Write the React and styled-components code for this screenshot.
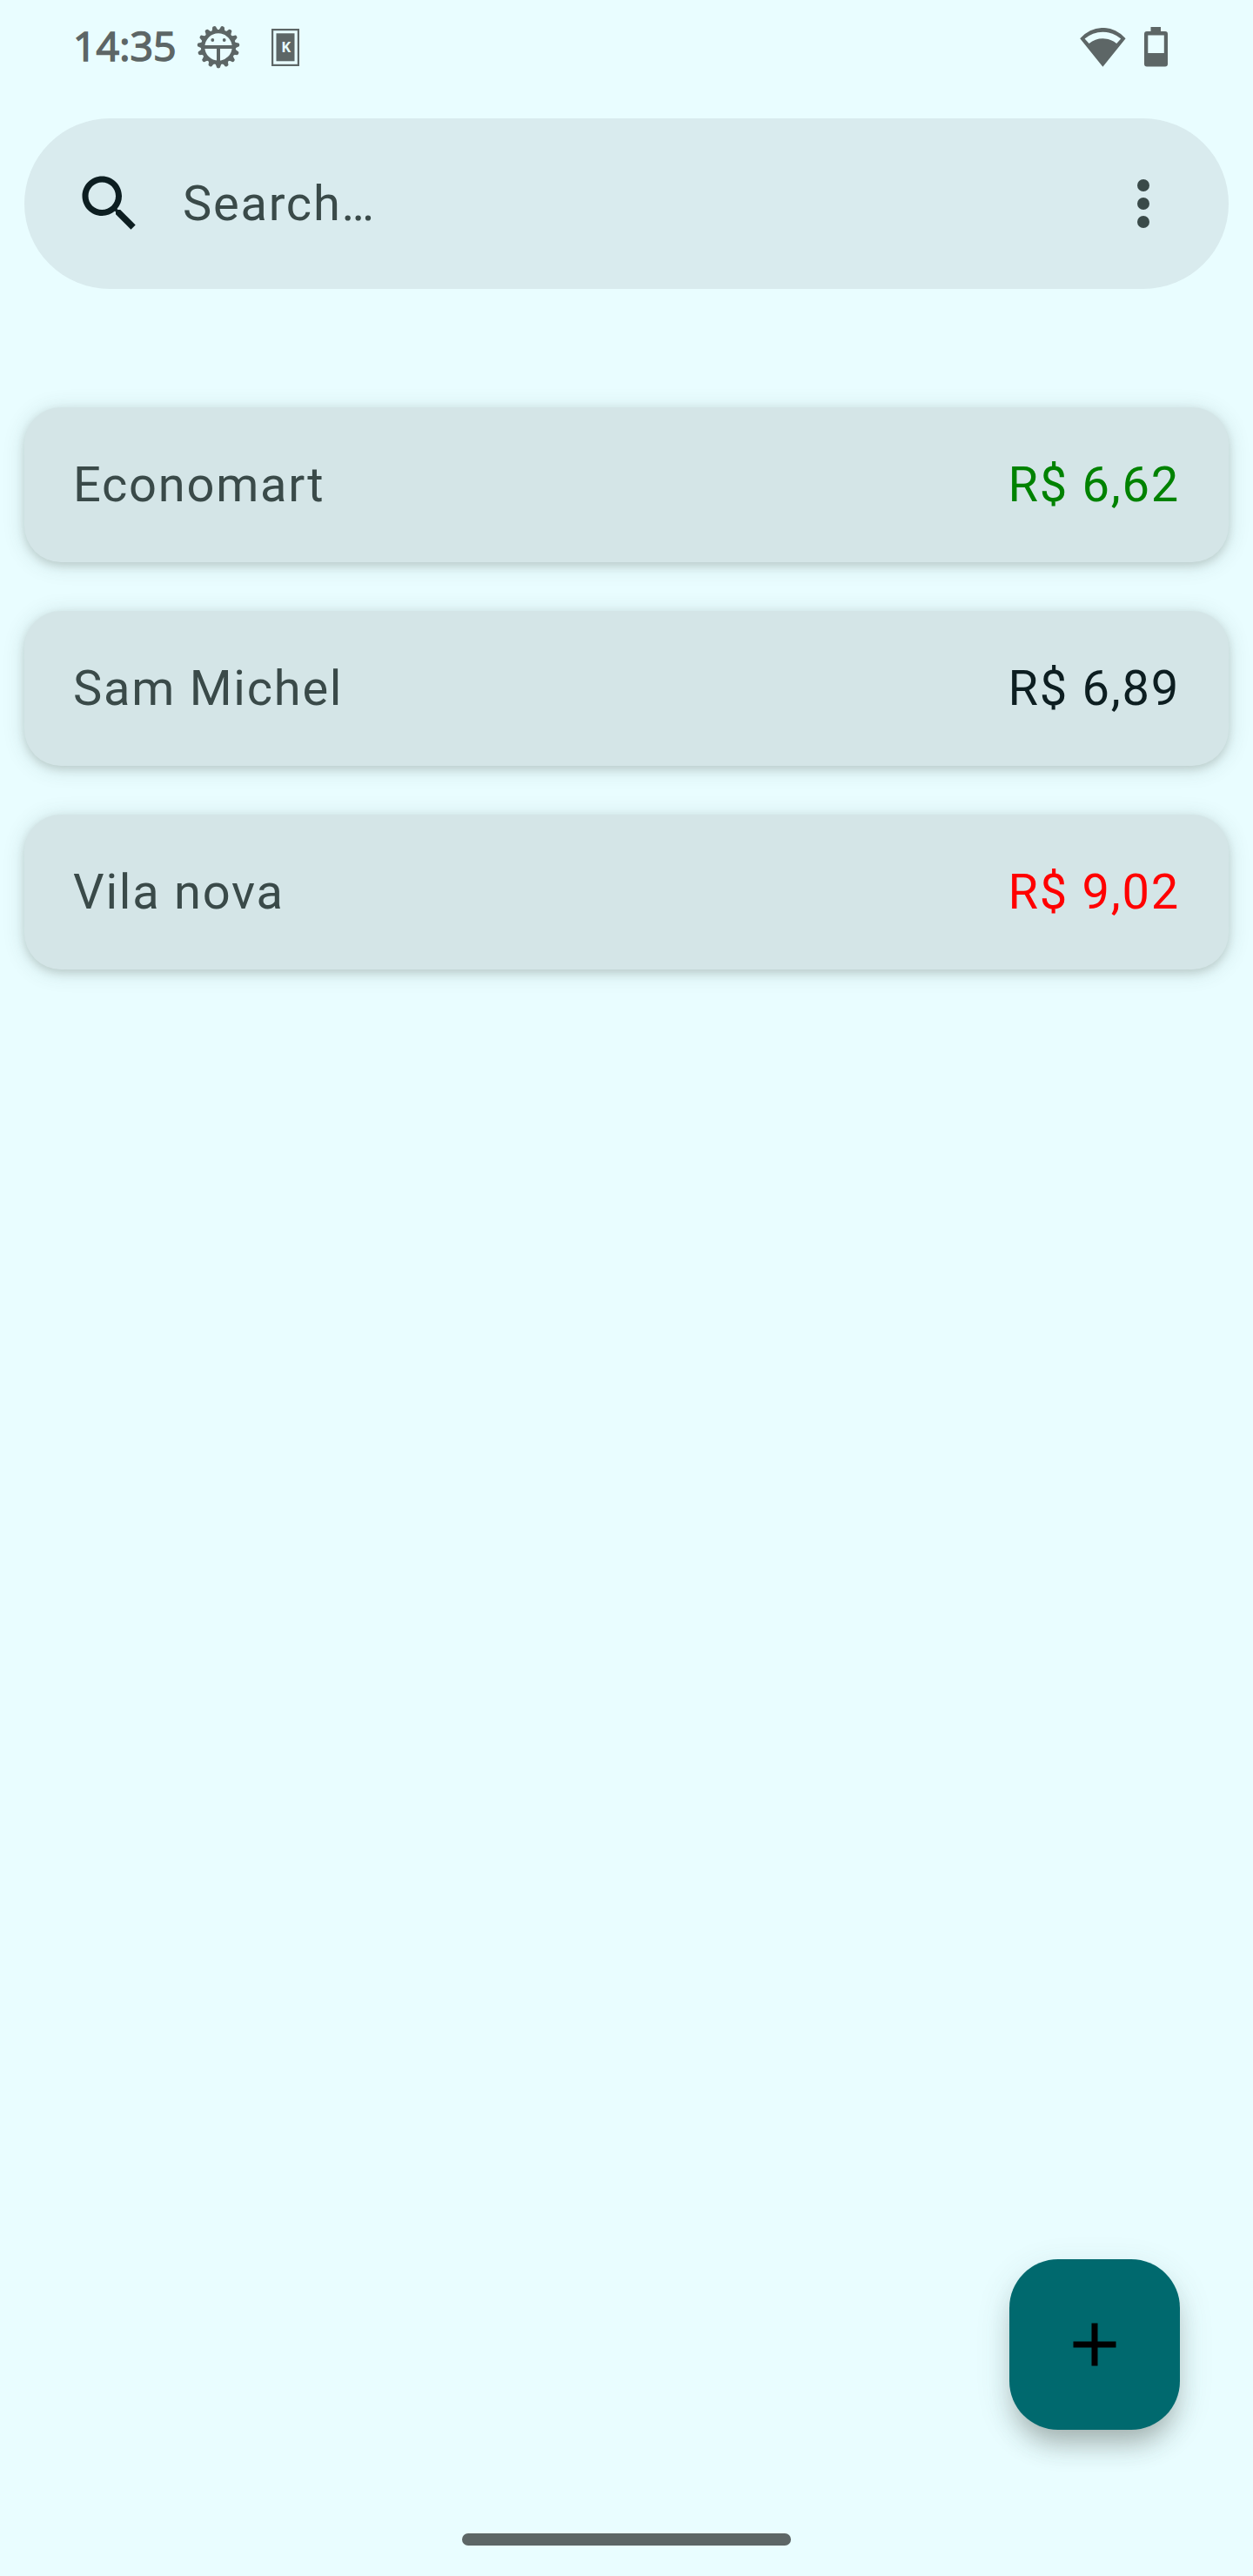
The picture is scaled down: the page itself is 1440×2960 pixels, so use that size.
import React from "react";
import styled, { createGlobalStyle } from "styled-components";

const GlobalStyle = createGlobalStyle`
  * { box-sizing: border-box; }
  body { margin: 0; background: #e9fdff; }
`;

const Screen = styled.div`
  width: 1440px;
  height: 2960px;
  display: flex;
  flex-direction: column;
  background: #e9fdff;
  color: #3a4a49;
  font-family: Roboto, "Liberation Sans", sans-serif;
  font-size: 56px;
  line-height: 84px;
  letter-spacing: 1.75px;
  overflow: hidden;
`;

const StatusBar = styled.header`
  height: 136px;
  flex: none;
  display: flex;
  justify-content: space-between;
  padding: 24px 98px 0 84px;
  color: #5d6666;
`;

const StatusGroup = styled.div`
  display: flex;
  align-items: center;
  height: 60px;
`;

const Clock = styled.time`
  width: 142px;
  padding-bottom: 4px;
  font-family: "Open Sans", sans-serif;
  font-size: 46.5px;
  font-weight: 400;
  line-height: 56px;
  letter-spacing: 0;
  -webkit-text-stroke: 1.6px currentColor;
`;

const Icon = styled.svg`
  display: block;
  flex: none;
  margin-left: ${(p) => p.$gap || 0}px;
  fill: currentColor;
  color: ${(p) => p.$color || "inherit"};
`;

const SearchBar = styled.div`
  height: 196px;
  flex: none;
  margin: 0 28px;
  padding: 0 56px;
  border-radius: 98px;
  background: #d9ebee;
  display: flex;
  align-items: center;
  gap: 42px;
`;

const Placeholder = styled.span`
  flex: 1;
`;

const List = styled.ul`
  list-style: none;
  margin: 0;
  padding: 136px 28px 0;
  flex: 1;
  display: flex;
  flex-direction: column;
  gap: 56px;
`;

const Card = styled.li`
  height: 178px;
  padding: 0 56px;
  border-radius: 42px;
  background: #d4e5e7;
  display: flex;
  align-items: center;
  justify-content: space-between;
  box-shadow: 0 4px 10px rgba(60, 70, 50, 0.16), 0 3px 24px rgba(60, 80, 80, 0.18);
`;

const Price = styled.span`
  color: ${(p) => p.$color};
`;

const Actions = styled.div`
  display: flex;
  justify-content: flex-end;
  padding: 0 84px 119px 0;
`;

const Fab = styled.button`
  width: 196px;
  height: 196px;
  padding: 0;
  border: 0;
  border-radius: 56px;
  background: #00696e;
  color: #000;
  display: grid;
  place-items: center;
  box-shadow: 0 22px 30px -8px rgba(55, 60, 50, 0.32), 0 12px 40px rgba(60, 80, 80, 0.14);
`;

const HomeIndicator = styled.div`
  width: 378px;
  height: 14px;
  flex: none;
  margin: 0 auto 35px;
  border-radius: 7px;
  background: #5d6666;
`;

const TEETH = Array.from({ length: 15 }, (_, i) => i * 24);

function GearIcon() {
  return (
    <Icon width="50" height="50" viewBox="-25 -25 50 50">
      <circle r="17.9" fill="none" stroke="currentColor" strokeWidth="4.4" />
      {TEETH.map((angle) => (
        <path key={angle} transform={`rotate(${angle})`} d="M-3.8 18.5L-2.4 22A2.4 2.4 0 0 0 2.4 22L3.8 18.5Z" />
      ))}
      <path d="M-17-2H17V2H2V17H-2V2H-17Z" />
      <circle cx="-6.7" cy="-8" r="1.9" />
      <circle cx="6.7" cy="-8" r="1.9" />
    </Icon>
  );
}

function KeyboardAppIcon() {
  return (
    <Icon $gap={36} width="32" height="43" viewBox="0 0 32 43">
      <rect x="1.1" y="1.1" width="29.8" height="40.8" fill="none" stroke="currentColor" strokeWidth="2.2" />
      <rect x="5.5" y="5.3" width="21" height="32" />
      <text x="11.2" y="27" fill="#e9fdff" fontFamily="Open Sans, sans-serif" fontWeight="700" fontSize="16.5" letterSpacing="0">
        K
      </text>
    </Icon>
  );
}

function WifiIcon() {
  return (
    <Icon width="53" height="45" viewBox="0 0 53 45">
      <path
        fillRule="evenodd"
        d="M26.4 44.8L0.2 12.3A34 34 0 0 1 52.6 12.3ZM5.6 12.5L10.6 18A25 25 0 0 1 42.2 18L47.2 12.5A31.5 31.5 0 0 0 5.6 12.5Z"
      />
    </Icon>
  );
}

function BatteryIcon() {
  return (
    <Icon $gap={21} width="27" height="46" viewBox="0 0 27 46">
      <path
        fillRule="evenodd"
        d="M7.5 0H19V5H24Q27 5 27 8V42.5Q27 45.5 24 45.5H3Q0 45.5 0 42.5V8Q0 5 3 5H7.5ZM4.3 9.5V30H22.8V9.5Z"
      />
    </Icon>
  );
}

function SearchIcon() {
  return (
    <Icon $color="#0d1e21" width="84" height="84" viewBox="0 0 24 24">
      <path d="M15.5 14h-.79l-.28-.27C15.41 12.59 16 11.11 16 9.5 16 5.91 13.09 3 9.5 3S3 5.91 3 9.5 5.91 16 9.5 16c1.61 0 3.09-.59 4.23-1.57l.27.28v.79l5 4.99L20.49 19l-4.99-5zm-6 0C7.01 14 5 11.99 5 9.5S7.01 5 9.5 5 14 7.01 14 9.5 11.99 14 9.5 14z" />
    </Icon>
  );
}

function MoreIcon() {
  return (
    <Icon width="84" height="84" viewBox="0 0 24 24">
      <circle cx="12" cy="6" r="2" />
      <circle cx="12" cy="12" r="2" />
      <circle cx="12" cy="18" r="2" />
    </Icon>
  );
}

const MARKETS = [
  { name: "Economart", price: "R$ 6,62", color: "#008200" },
  { name: "Sam Michel", price: "R$ 6,89", color: "#0d1e21" },
  { name: "Vila nova", price: "R$ 9,02", color: "#ff0000" },
];

export default function App() {
  return (
    <Screen>
      <GlobalStyle />
      <StatusBar>
        <StatusGroup>
          <Clock>14:35</Clock>
          <GearIcon />
          <KeyboardAppIcon />
        </StatusGroup>
        <StatusGroup>
          <WifiIcon />
          <BatteryIcon />
        </StatusGroup>
      </StatusBar>
      <SearchBar>
        <SearchIcon />
        <Placeholder>Search…</Placeholder>
        <MoreIcon />
      </SearchBar>
      <List>
        {MARKETS.map((m) => (
          <Card key={m.name}>
            <span>{m.name}</span>
            <Price $color={m.color}>{m.price}</Price>
          </Card>
        ))}
      </List>
      <Actions>
        <Fab aria-label="Add">
          <Icon width="84" height="84" viewBox="0 0 24 24">
            <path d="M19 13h-6v6h-2v-6H5v-2h6V5h2v6h6v2z" />
          </Icon>
        </Fab>
      </Actions>
      <HomeIndicator />
    </Screen>
  );
}
